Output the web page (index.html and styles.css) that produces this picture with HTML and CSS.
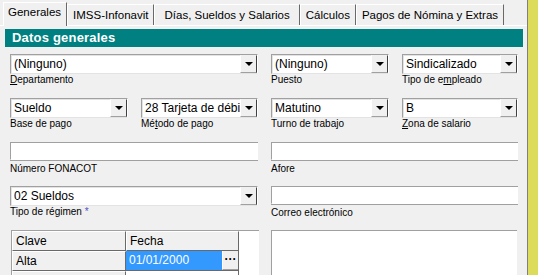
FILE: index.html
```html
<!DOCTYPE html>
<html lang="es">
<head>
  <meta charset="UTF-8">
  <title>Empleado - Datos generales</title>
  <link rel="stylesheet" href="styles.css">
</head>
<body>
  <div class="window">
    <div class="main">
      <div class="tabs">
        <div class="tab active">Generales</div>
        <div class="tab">IMSS-Infonavit</div>
        <div class="tab wide">Días, Sueldos y Salarios</div>
        <div class="tab">Cálculos</div>
        <div class="tab">Pagos de Nómina y Extras</div>
      </div>

      <div class="pane">
        <div class="section-title">Datos generales</div>

        <div class="form">
          <div class="field span2">
            <div class="combo"><span class="value">(Ninguno)</span><span class="arrow"></span></div>
            <label><u>D</u>epartamento</label>
          </div>
          <div class="field">
            <div class="combo"><span class="value">(Ninguno)</span><span class="arrow"></span></div>
            <label>Puesto</label>
          </div>
          <div class="field">
            <div class="combo"><span class="value">Sindicalizado</span><span class="arrow"></span></div>
            <label>Tipo de e<u>m</u>pleado</label>
          </div>

          <div class="field">
            <div class="combo"><span class="value">Sueldo</span><span class="arrow"></span></div>
            <label>Base de pago</label>
          </div>
          <div class="field">
            <div class="combo"><span class="value">28 Tarjeta de débito</span><span class="arrow"></span></div>
            <label>Mé<u>t</u>odo de pago</label>
          </div>
          <div class="field">
            <div class="combo"><span class="value">Matutino</span><span class="arrow"></span></div>
            <label>Turno de trabajo</label>
          </div>
          <div class="field">
            <div class="combo"><span class="value">B</span><span class="arrow"></span></div>
            <label><u>Z</u>ona de salario</label>
          </div>

          <div class="field span2">
            <div class="text"></div>
            <label>Número FONACOT</label>
          </div>
          <div class="field span2">
            <div class="text"></div>
            <label>Afore</label>
          </div>

          <div class="field span2">
            <div class="combo"><span class="value">02 Sueldos</span><span class="arrow"></span></div>
            <label>Tipo de régimen <span class="req">*</span></label>
          </div>
          <div class="field span2">
            <div class="text"></div>
            <label>Correo electrónico</label>
          </div>

          <div class="grid-table span2">
            <div class="cell head">Clave</div>
            <div class="cell head">Fecha</div>
            <div class="cell blank"></div>
            <div class="cell fixed">Alta</div>
            <div class="cell selected"><span class="date">01/01/2000</span><span class="dots">···</span></div>
            <div class="cell blank"></div>
            <div class="cell fixed">Baja</div>
            <div class="cell">08/01/2017</div>
            <div class="cell blank"></div>
          </div>
          <div class="memo span2"></div>
        </div>
      </div>
    </div>
    <div class="strip"></div>
  </div>
</body>
</html>
```

FILE: styles.css
```css
body {
  margin: 0;
  background: #f0f0f0;
  font-family: "Liberation Sans", Arial, sans-serif;
  color: #000;
  overflow: hidden;
}
.window {
  display: flex;
  height: 275px;
  overflow: hidden;
}
.main {
  width: 527px;
  flex: none;
}
.strip {
  flex: 1;
  background: #dcdc5a;
  border-left: 1px solid #808080;
}

/* tabs */
.tabs {
  display: flex;
  align-items: flex-start;
  height: 25px;
  padding-left: 3px;
}
.tab {
  margin-top: 4px;
  height: 21px;
  box-sizing: border-box;
  padding: 3px 5px 0 5px;
  font-size: 11.5px;
  line-height: 15px;
  white-space: nowrap;
  border-left: 1px solid #fff;
  border-top: 1px solid #fff;
  border-right: 1px solid #696969;
}
.tab.wide {
  padding-left: 9px;
  padding-right: 9px;
}
.tab.active {
  margin-top: 2px;
  height: 24px;
  padding: 2px 5px 0 4px;
  position: relative;
  z-index: 1;
  background: #f0f0f0;
}
.pane {
  border-top: 1px solid #fff;
  height: 249px;
}
.section-title {
  margin: 3px 4px 0 5px;
  height: 18px;
  background: #008080;
  color: #fff;
  font-size: 13px;
  font-weight: bold;
  line-height: 18px;
  padding-left: 7px;
  letter-spacing: 0.2px;
}

/* form */
.form {
  display: grid;
  grid-template-columns: 118px 117px 118px 116px;
  grid-auto-rows: 33px;
  column-gap: 13px;
  row-gap: 11px;
  padding: 7px 0 0 10px;
}
.span2 { grid-column: span 2; }
.field {
  display: flex;
  flex-direction: column;
}
.field label {
  font-size: 10px;
  line-height: 12px;
  height: 13px;
}
.req {
  color: #5050c8;
}
.combo {
  display: flex;
  height: 20px;
  box-sizing: border-box;
  background: #fff;
  border: 1px solid;
  border-color: #a0a0a0 #fff #e3e3e3 #a0a0a0;
  box-shadow: inset 1px 1px 0 #e3e3e3;
}
.combo .value {
  flex: 1;
  padding: 1px 0 0 3px;
  font-size: 12px;
  line-height: 16px;
  white-space: nowrap;
  overflow: hidden;
}
.combo .arrow {
  width: 17px;
  flex: none;
  box-sizing: border-box;
  background: #f0f0f0;
  border: 1px solid;
  border-color: #f0f0f0 #404040 #a0a0a0 #fff;
  display: flex;
  align-items: center;
  justify-content: center;
}
.combo .arrow::after {
  content: "";
  border-left: 4px solid transparent;
  border-right: 4px solid transparent;
  border-top: 4px solid #000;
}
.text {
  height: 19px;
  box-sizing: border-box;
  background: #fff;
  border-top: 1px solid #a0a0a0;
  border-left: 1px solid #a0a0a0;
  border-bottom: 1px solid #fff;
  box-shadow: 0 1px 0 #a0a0a0;
  margin-bottom: 2px;
}
.field .text + label {
  margin-top: 1px;
}

/* grid of dates */
.grid-table {
  display: grid;
  grid-template-columns: 114px 113px 1fr;
  grid-auto-rows: 20px;
  margin-left: 1px;
  width: 247px;
  background: #fff;
  border-top: 1px solid #a0a0a0;
  border-left: 1px solid #a0a0a0;
  height: 60px;
  overflow: hidden;
}
.cell {
  box-sizing: border-box;
  font-size: 12px;
  line-height: 18px;
  padding-left: 3px;
  border-right: 1px solid #696969;
  border-bottom: 1px solid #696969;
  white-space: nowrap;
  overflow: hidden;
}
.cell.head,
.cell.fixed {
  background: #f0f0f0;
  border-left: 1px solid #fff;
  border-top: 1px solid #fff;
}
.cell.blank {
  border: none;
}
.cell.selected {
  display: flex;
  padding: 0;
  background: #3399ff;
  color: #fff;
}
.selected .date {
  flex: 1;
  padding-left: 3px;
}
.selected .dots {
  width: 16px;
  box-sizing: border-box;
  background: #f0f0f0;
  color: #000;
  font-weight: bold;
  text-align: center;
  line-height: 16px;
  border-left: 1px solid #fff;
  border-bottom: 1px solid #a0a0a0;
}
.memo {
  height: 60px;
  background: #fff;
  border-top: 1px solid #a0a0a0;
  border-left: 1px solid #a0a0a0;
  width: 246px;
  box-sizing: border-box;
}
```
